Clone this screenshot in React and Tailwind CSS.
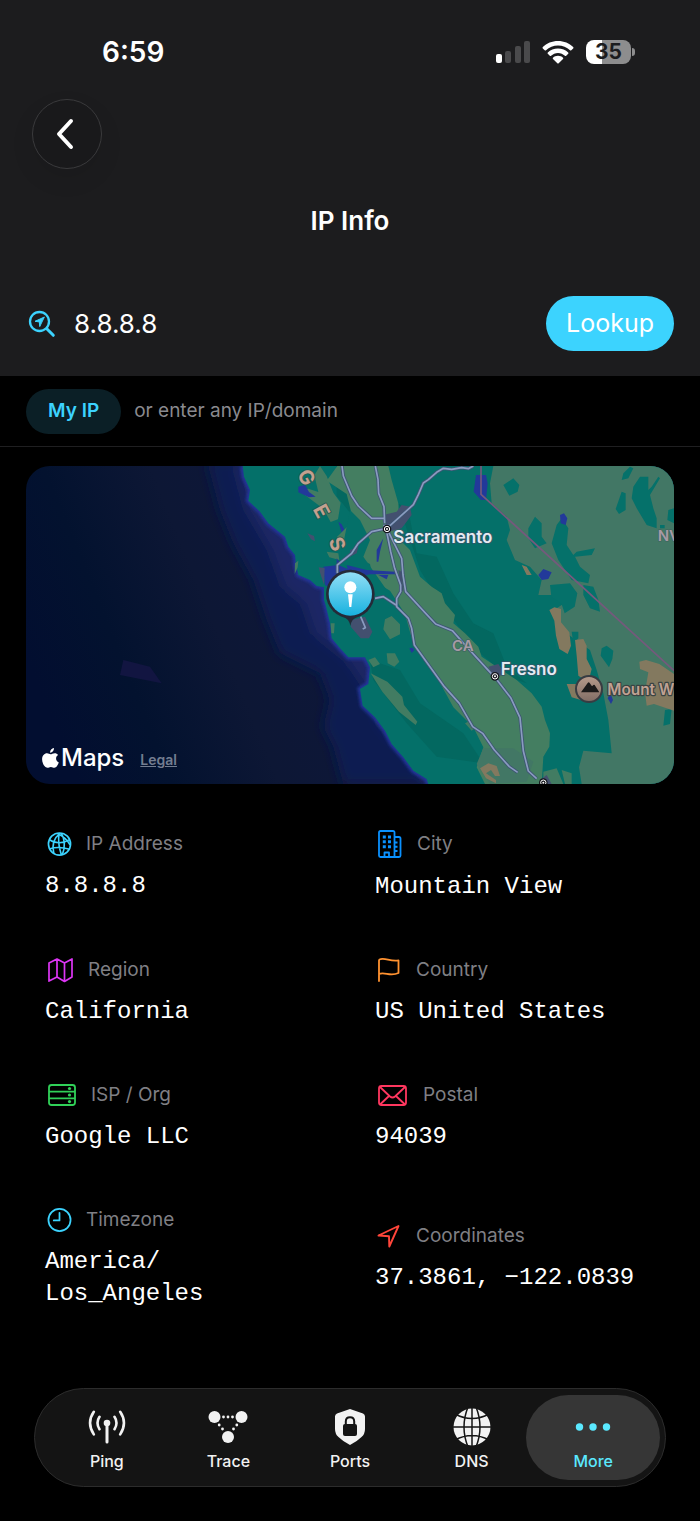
import { useState } from "react";

const ROAD = "#8a9cc0";

function Signal() {
  return (
    <svg className="h-6 w-[34px]" viewBox="0 0 34 24" aria-hidden="true">
      <rect x="0" y="14" width="6" height="9" rx="2" fill="#fff" />
      <rect x="9" y="11" width="6" height="12" rx="2" fill="#4a4a4c" />
      <rect x="19" y="6" width="6" height="17" rx="2" fill="#4a4a4c" />
      <rect x="28" y="1" width="6" height="22" rx="2" fill="#4a4a4c" />
    </svg>
  );
}

function Wifi() {
  return (
    <svg className="h-6 w-8" viewBox="0 0 32 24" fill="#fff" aria-hidden="true">
      <path d="M16 1C10 1 4.700 3.300.8 7.100c-.4.400-.4.900 0 1.300l1.900 1.900c.4.400.9.400 1.300 0C7.200 7.200 11.400 5.400 16 5.400s8.800 1.800 12 4.900c.4.400.9.400 1.300 0l1.900-1.900c.4-.4.400-.9 0-1.300C27.300 3.300 22 1 16 1z" />
      <path d="M16 8.400c-4 0-7.600 1.500-10.200 4-.4.400-.4.900 0 1.300l2 2c.4.400.9.400 1.300 0 1.800-1.700 4.200-2.800 6.900-2.800s5.100 1.100 6.900 2.800c.4.400.9.400 1.300 0l2-2c.4-.4.400-.9 0-1.300C23.600 9.900 20 8.400 16 8.400z" />
      <path d="M16 15.800c-2 0-3.700.7-5 1.900-.4.400-.4.900 0 1.300l4.300 4.300c.4.400 1 .4 1.400 0L21 19c.4-.4.400-.9 0-1.300-1.300-1.200-3-1.900-5-1.900z" />
    </svg>
  );
}

function Battery() {
  return (
    <div className="flex items-center gap-px">
      <div className="flex h-6 w-[45px] items-center justify-center rounded-lg bg-[linear-gradient(to_right,#fff_36%,#8d8d8e_36%)] text-[21px] leading-6 font-bold text-[#1c1c1e]">
        35
      </div>
      <div className="h-2 w-[3px] rounded-r-full bg-[#8d8d8e]" />
    </div>
  );
}

function SearchPin() {
  return (
    <svg className="h-7 w-7" viewBox="0 0 28 28" fill="none" stroke="#3cd3fe" strokeWidth="2.300" strokeLinecap="round" strokeLinejoin="round" aria-hidden="true">
      <circle cx="11.500" cy="11.500" r="9.500" />
      <path d="M18.800 18.800l6.500 6.500" strokeWidth="3" />
      <path d="M16 7.200L7 11.300l4.300.6.400 4.300z" fill="#3cd3fe" strokeWidth="1" />
    </svg>
  );
}

function GlobeIcon() {
  return (
    <svg className="h-[26px] w-[25px]" viewBox="0 0 26 26" fill="none" stroke="#3cd3fe" strokeWidth="1.700" aria-hidden="true">
      <circle cx="13" cy="13" r="11.500" />
      <path d="M2.500 8.500c6 4.500 15 4 21 0M3 18c6-2 14-1.500 20.500.5M13.500 2C7 7 5 14 7 22.500M12.500 2c-1 7 0 15 2.500 22.500M15 2c3.500 6 4 14 1 22M11 2c6 3 10.500 7 13 12" />
    </svg>
  );
}

function MapIcon() {
  return (
    <svg className="h-[26px] w-[27px]" viewBox="0 0 27 26" fill="none" stroke="#dd35f5" strokeWidth="1.700" strokeLinejoin="round" aria-hidden="true">
      <path d="M2 6l8-4 7.500 4L25 2v18l-7.500 4.500L10 20l-8 4zM10 2v18M17.500 6v18.500" />
    </svg>
  );
}

function ServerIcon() {
  return (
    <svg className="h-[26px] w-[30px]" viewBox="0 0 30 26" fill="none" stroke="#30d158" strokeWidth="1.800" aria-hidden="true">
      <rect x="2" y="3" width="26" height="20" rx="2.500" />
      <path d="M2 9.700h26M2 16.300h26" />
      <g fill="#30d158" stroke="none">
        <circle cx="22.500" cy="6.500" r="1.600" />
        <circle cx="22.500" cy="13" r="1.600" />
        <circle cx="22.500" cy="19.600" r="1.600" />
      </g>
    </svg>
  );
}

function ClockIcon() {
  return (
    <svg className="h-[26px] w-[25px]" viewBox="0 0 26 26" fill="none" stroke="#3cd3fe" strokeWidth="1.800" strokeLinecap="round" strokeLinejoin="round" aria-hidden="true">
      <circle cx="13" cy="13" r="11.500" />
      <path d="M13 5.500v8H7" />
    </svg>
  );
}

function BuildingIcon() {
  return (
    <svg className="h-[30px] w-[26px]" viewBox="0 -1 26 30" fill="none" stroke="#0a91ff" strokeWidth="1.800" strokeLinejoin="round" aria-hidden="true">
      <path d="M17.500 27V2.500q0-1.500-1.500-1.500H3.500Q2 1 2 2.500v23Q2 27 3.500 27H22q1.500 0 1.500-1.500v-17Q23.500 7 22 7h-4.500M7.500 27v-4.500h4.500V27" />
      <g fill="#0a91ff" stroke="none">
        <path d="M5.800 5.500h3v3h-3zM11 5.500h3v3h-3zM5.800 10.300h3v3h-3zM11 10.300h3v3h-3zM5.800 15.200h3v3h-3zM11 15.200h3v3h-3z" />
        <path d="M18 11.500h2.500v2H18zM18 15.700h2.500v2H18zM18 19.900h2.500v2H18z" />
      </g>
    </svg>
  );
}

function FlagIcon() {
  return (
    <svg className="h-[26px] w-[25px]" viewBox="0 0 25 26" fill="none" stroke="#ff9230" strokeWidth="1.800" strokeLinecap="round" strokeLinejoin="round" aria-hidden="true">
      <path d="M2 24V3.500Q2 2.500 3.500 2.200C9 .8 13 4.800 21.500 3.500V16C13 20 8 14.500 2 17" />
    </svg>
  );
}

function MailIcon() {
  return (
    <svg className="h-[26px] w-8" viewBox="0 0 32 26" fill="none" stroke="#ff375f" strokeWidth="1.800" strokeLinejoin="round" aria-hidden="true">
      <rect x="2" y="4" width="27" height="19" rx="2.500" />
      <path d="M3 5l10 9.500q2.500 2 5 0L28 5M3 22.500l9-8.500M28 22.500L19 14" />
    </svg>
  );
}

function ArrowIcon() {
  return (
    <svg className="h-[26px] w-[25px]" viewBox="0 0 25 26" fill="none" stroke="#ff453a" strokeWidth="1.900" strokeLinejoin="round" aria-hidden="true">
      <path d="M21.500 3L1.500 12.500l10.500.8.300 10.200z" />
    </svg>
  );
}

function PingIcon() {
  return (
    <svg className="h-10 w-10" viewBox="0 0 40 40" fill="none" stroke="#f2f2f2" strokeWidth="2.600" strokeLinecap="round" aria-hidden="true">
      <circle cx="20" cy="16" r="3.300" fill="#f2f2f2" stroke="none" />
      <path d="M20 17v18" strokeWidth="3" />
      <path d="M12.500 9.800q-4 6 0 12.400M27.500 9.800q4 6 0 12.400M6.800 4.800q-7.500 11 0 22.600M33.200 4.800q7.500 11 0 22.600" />
    </svg>
  );
}

function TraceIcon() {
  return (
    <svg className="h-10 w-10" viewBox="0 0 40 40" fill="#f2f2f2" aria-hidden="true">
      <circle cx="6.500" cy="10" r="6" />
      <circle cx="33.500" cy="10" r="6" />
      <circle cx="20" cy="30" r="6" />
      <circle cx="15.500" cy="10" r="1.400" />
      <circle cx="20" cy="10" r="1.400" />
      <circle cx="24.500" cy="10" r="1.400" />
      <circle cx="11.200" cy="18" r="1.400" />
      <circle cx="14.500" cy="22" r="1.400" />
      <circle cx="28.800" cy="18" r="1.400" />
      <circle cx="25.500" cy="22" r="1.400" />
    </svg>
  );
}

function PortsIcon() {
  return (
    <svg className="h-10 w-10" viewBox="0 0 40 40" aria-hidden="true">
      <path d="M20 2l13 4.600q2 .8 2 3V22q0 5-3.500 8Q27 34.500 20 38 13 34.500 8.500 30 5 27 5 22V9.600q0-2.200 2-3z" fill="#f2f2f2" />
      <rect x="13" y="17" width="14" height="12" rx="2" fill="#141414" />
      <path d="M15.800 18v-3.500q0-4.200 4.200-4.200t4.200 4.200V18" fill="none" stroke="#141414" strokeWidth="2" />
    </svg>
  );
}

function DnsIcon() {
  return (
    <svg className="h-10 w-10" viewBox="0 0 40 40" fill="none" stroke="#141414" strokeWidth="1.500" aria-hidden="true">
      <circle cx="20" cy="20" r="18.500" fill="#f2f2f2" stroke="none" />
      <path d="M20 0v40M0 20h40M16 0q-8 20 0 40M24 0q8 20 0 40M3 7q17 9 34 0M3 33q17-9 34 0" />
    </svg>
  );
}

function MoreIcon() {
  return (
    <svg className="h-10 w-10" viewBox="0 0 40 40" fill="#5be9ff" aria-hidden="true">
      <circle cx="6.500" cy="20" r="3.700" />
      <circle cx="20" cy="20" r="3.700" />
      <circle cx="33.500" cy="20" r="3.700" />
    </svg>
  );
}

function CityDot({ x, y }) {
  return (
    <g>
      <circle cx={x} cy={y} r="13" fill="#15161c" />
      <circle cx={x} cy={y} r="8" fill="none" stroke="#fff" strokeWidth="3" />
      <circle cx={x} cy={y} r="3" fill="#fff" />
    </g>
  );
}

// drawn at three units per pixel
function Terrain() {
  return (
    <svg className="block h-full w-full" viewBox="18 18 1944 954" preserveAspectRatio="xMidYMid slice" role="img" aria-label="Map of California">
      <defs>
        <linearGradient id="sea" x1="0" y1="0.600" x2="1" y2="0.400">
          <stop offset="0" stopColor="#020e30" />
          <stop offset="0.140" stopColor="#03122f" />
          <stop offset="0.300" stopColor="#0d1735" />
          <stop offset="0.600" stopColor="#0e173d" />
          <stop offset="1" stopColor="#0d1b52" />
        </linearGradient>
        <linearGradient id="pin" x1="0" y1="0" x2="0" y2="1">
          <stop offset="0" stopColor="#91def6" />
          <stop offset="1" stopColor="#18b2df" />
        </linearGradient>
        <linearGradient id="peak" x1="0" y1="0" x2="0" y2="1">
          <stop offset="0" stopColor="#b79b8b" />
          <stop offset="1" stopColor="#806c64" />
        </linearGradient>
        <filter id="soft" x="-20%" y="-20%" width="140%" height="140%">
          <feGaussianBlur stdDeviation="18" />
        </filter>
        <filter id="glow" x="-20%" y="-20%" width="140%" height="140%">
          <feGaussianBlur stdDeviation="5" />
        </filter>
      </defs>

      <rect x="18" y="18" width="1944" height="954" fill="url(#sea)" />
      <path d="M310 600l80 20 35 50-125-25z" fill="#121541" />
      <g filter="url(#soft)">
        <path d="M560 0L600 150 640 250 700 360 740 480 780 580 900 640 930 720 910 800 940 860 970 972H1300V0z" fill="#0d1f51" />
        <path d="M640 0L680 150 750 270 790 380 850 430 880 520 980 600 1040 690 1080 800 1160 880 1220 990H1400V0z" fill="#1a2765" />
      </g>
      <path d="M668 18l4 32 18 40-5 32 35 33 25 35 50 40 10 30 20 25 3 30 7 30 35 15 20 18 22 4v38l6 20 12 50 5 45 25 30 25 27h50l15 30-5 50-25 15 8 50 37 35 30 40 20 40 35 40 30 40 40 25 5 17" fill="none" stroke="#24359b" strokeWidth="14" filter="url(#glow)" />
      <path d="M668 18l4 32 18 40-5 32 35 33 25 35 50 40 10 30 20 25 3 30 7 30 35 15 20 18 22 4v38l6 20 12 50 5 45 25 30 25 27h50l15 30-5 50-25 15 8 50 37 35 30 40 20 40 35 40 30 40 40 25 5 17H1962V18z" fill="#047069" />

      {/* coast range */}
      <g fill="#427c62">
        <path d="M900 18l20 30 20 50 22 30-8 50-22 8-22-40-40-30-35-25 30-5 30 10-12-50z" />
        <path d="M920 275l35 5 3 20-30-8zM825 310l10-8-2 20-9 20zM932 490l12 0-2 30-8 0z" />
      </g>
      <g fill="#22399a">
        <path d="M835 80l20-6 12 22 20 14-20 2-32-15z" />
        <path d="M955 185l10 8 13 25-12 2zM950 295l8 10-8 10z" />
        <path d="M910 320l45-5 35 15v60l-45 0-30-15z" />
      </g>
      <path d="M862 220l20 8 3 16-12-6zM896 322l18 2-2 50-10-30z" fill="#43506f" />

      <g transform="translate(990 0)">
        {/* deeper slopes */}
        <g fill="#036860">
          <path d="M145 130l30 20 25 130 60 10 50 110 60 90 60 30 40 100 60 50-60-20-100-90-110-150-50-80z" />
          <path d="M60 600l90 30 60 100 130 90 60 90-140-20-90-100-100-130z" />
          <path d="M-40 18l70 0-20 80-10 60-40-50z" />
        </g>
        {/* valley */}
        <path d="M-38 18H115l10 42 20 70 5 110 30 30 30 80 35 30 30 20 10 30 30 35-5 25 35 30 40 40 10 30 45 30 60 40 45 40 30 40 10 40 15 40-2 40-18 30-5 82H405l-25-50 20-60-30-60-60-60-60-110-60-80-25-90-45-70-50-30-10-50-60-30-40-50 50-50-20-80-60-40z" fill="#447e61" />
        <path d="M0 150l30 30 30 60-20 50 70 100-30 0-60-50-50-40z" fill="#047069" />
        <path d="M400 865l90 0 60 40-20 60-110 7-40-60z" fill="#427765" />
        <g fill="#427c62">
          <path d="M105 478l20-10 25 25 0 30-30 15-20-30zM55 600l20-8 15 20-20 10zM110 580l25 0 13 25-15 15-20-10zM62 640l50 25 45 45 5 25 40 50-5 10-50-40-50-60zM345 790l20-10 15 20-15 12z" />
          <path d="M580 935l40-10 20 47h-60zM635 930l30 10v32h-20z" />
        </g>
        {/* great basin */}
        <path d="M430 18H972V972H695l-8-50 13-50 85 8-10-100-15-80-20-70-20-60-50-35-40-30-10-60 30-20-40-20-45 0 10-45-35-40-45-20-25-60 10-30-10-40-45-40-5-60z" fill="#427765" />
        <g fill="#05716a">
          <path d="M460 75l30-20 18 20-5 20-25 12zM535 205l20-35 20 20 0 40 15 20-35 15-20-30zM620 195l15-20 20 30-5 50 20 30 10-10 55-10-10 20-50 5 15 30 30 25-5 25-50-10-40-60-20-50z" />
          <path d="M700 375l30 5 15 40 5 35-30-10-20-40zM755 565l15-8 20 15-3 25-10 25-25-35zM665 515l20 0 0 20-15 15zM600 375l60-5 22 30-8 40-30 20-10-30-30-20z" />
          <path d="M850 80l20-30 25 0 0 40 10-10 20-30 5 5-30 50 10 40 10 30 0 30-30-10-30-50-15-30zM815 95l12 5 0 50-20 12-10-15zM820 40l20-20 10 5-15 30-20 5zM955 150l17-5v45l-20-10zM945 750l20-3-5 45-20 5zM930 195h14v10h-14z" />
        </g>
        <g fill="#83795f">
          <path d="M598 450l15-8 20 5 0 40 25 30 5 40-10 25-25-15-10-40-5-45zM675 540l25-3 10 20 0 40 15 30-10 40-30-20-5-60zM650 672l35 0 15 50-35-10zM868 605l20-5 40 12 44 30v110l-60-20-22 5-5-40 10-60-25-10zM515 315l15 5 15 25-15 0z" />
          <path d="M390 925l25-15 25 8 10 30-15 0-12-18-15 10 30 20 0 10-30-15z" />
        </g>
        <g fill="#22399a">
          <path d="M378 45h30l5 25-5 50-15 0-22-25zM630 165l12-5 10 15-5 20-15-5zM565 345l15-18 25 10-10 20-20 3zM178 565l10-2 5 8-8 8zM773 715l8-15 8 20-6 12z" />
          <path d="M-10 315l60 15 85 5v8l-75 0-60 15zM80 270l20-35-10 40-5 30h-5zM85 345l30 0-5 13z" />
        </g>
        <g fill="#43506f">
          <path d="M100 165l40-10 15-20 25 5 5 25-30 40-40 10zM145 330l10 5 5 60-5-5zM5 480l40-10 22 45-10 20-25 0-30-35zM415 620l30-8 20 30-30 10zM0 270l25-10-5 20-20 10zM570 960l20-15 15 27h-35z" />
        </g>

        <path d="M393 18v85L972 632" fill="none" stroke="#75597c" strokeWidth="5" />

        <g fill="none" stroke="#3e5573" strokeWidth="10" strokeLinejoin="round">
          <path d="M76 18l8 40 2 42 16 40 2 50M-24 18l4 30 25 60 20 30 40 37h38M370 18l-15 8-20-3-30 5-25-3-20 12-25 22-15 10-15 35-15 30-70 63h-20" />
          <path d="M110 205l-45 10-40 35-20 30-43 35v25M110 215l12 60 12 50 18 50v20l-12 20v25l35 35 10 30 8 50 90 125 45 50 40 70 30 20 35 50 45 50 25 17M115 215l40 80 4 50 8 50 60 65 30 32 50 20 40 45 90 98 45 58 28 60 10 100 15 60 25 23M75 415l25-5 38 25" />
        </g>
        <g fill="none" stroke={ROAD} strokeWidth="5" strokeLinejoin="round">
          <path d="M76 18l8 40 2 42 16 40 2 50M-24 18l4 30 25 60 20 30 40 37h38M370 18l-15 8-20-3-30 5-25-3-20 12-25 22-15 10-15 35-15 30-70 63h-20" />
          <path d="M110 205l-45 10-40 35-20 30-43 35v25M110 215l12 60 12 50 18 50v20l-12 20v25l35 35 10 30 8 50 90 125 45 50 40 70 30 20 35 50 45 50 25 17M115 215l40 80 4 50 8 50 60 65 30 32 50 20 40 45 90 98 45 58 28 60 10 100 15 60 25 23M75 415l25-5 38 25M32 470l14 33-8 4" />
        </g>
        <CityDot x={111} y={207} />
        <CityDot x={435} y={649} />
        <CityDot x={580} y={968} />

        <circle cx="717" cy="687" r="39" fill="url(#peak)" stroke="#383c42" strokeWidth="6" />
        <path d="M693 697l20-28q3-4 6 0l7 10 4-4q2-2 4 0l14 22z" fill="#1c1a1a" />
      </g>

      <g fontFamily="Inter, sans-serif" fontWeight="600" paintOrder="stroke" strokeLinejoin="round">
        <g fill="#c3a08f" stroke="#26584f" strokeWidth="5" fontSize="60" fontWeight="700" textAnchor="middle">
          <text transform="translate(841 62) rotate(62)">G</text>
          <text transform="translate(886 163) rotate(62)">E</text>
          <text transform="translate(932 260) rotate(68)">S</text>
        </g>
        <g fill="#e4ebf2" stroke="#33566a" strokeWidth="5" fontSize="51">
          <text x="1120" y="249">Sacramento</text>
          <text x="1442" y="646">Fresno</text>
        </g>
        <g fill="#a79aa5" stroke="#40675f" strokeWidth="4" fontSize="45">
          <text x="1296" y="572">CA</text>
          <text x="1913" y="243">NV</text>
        </g>
        <text x="1762" y="704" fill="#c0a293" stroke="#3a4443" strokeWidth="7" fontSize="46">Mount W</text>
      </g>

      <path d="M962 466q26 10 29 32 3-22 29-32z" fill="#252a38" />
      <circle cx="991" cy="402" r="73" fill="#252a38" />
      <circle cx="991" cy="402" r="65" fill="url(#pin)" />
      <circle cx="991" cy="382" r="18" fill="#fff" />
      <path d="M984 403h14l-4 38h-6z" fill="#fff" />
    </svg>
  );
}

const LEFT = [
  { id: "ip", label: "IP Address", value: "8.8.8.8", Icon: GlobeIcon },
  { id: "region", label: "Region", value: "California", Icon: MapIcon },
  { id: "isp", label: "ISP / Org", value: "Google LLC", Icon: ServerIcon },
  { id: "tz", label: "Timezone", value: "America/\nLos_Angeles", Icon: ClockIcon },
];

const RIGHT = [
  { id: "city", label: "City", value: "Mountain View", Icon: BuildingIcon },
  { id: "country", label: "Country", value: "US United States", Icon: FlagIcon },
  { id: "postal", label: "Postal", value: "94039", Icon: MailIcon },
  { id: "coords", label: "Coordinates", value: "37.3861, −122.0839", Icon: ArrowIcon },
];

const ROWS = LEFT.map((l, i) => [l, RIGHT[i]]);

const TABS = [
  { label: "Ping", Icon: PingIcon },
  { label: "Trace", Icon: TraceIcon },
  { label: "Ports", Icon: PortsIcon },
  { label: "DNS", Icon: DnsIcon },
  { label: "More", Icon: MoreIcon },
];

function Field({ label, value, Icon }) {
  return (
    <div className="flex flex-col gap-3">
      <dt className="flex min-h-7 items-center gap-[14px] pl-0.5 text-[19px] leading-7 text-[#7f7f84]">
        <Icon />
        {label}
      </dt>
      <dd className="font-['Liberation_Mono',monospace] text-2xl leading-8 whitespace-pre-line text-white">{value}</dd>
    </div>
  );
}

export default function App() {
  const [query, setQuery] = useState("8.8.8.8");
  const [tab, setTab] = useState("More");

  return (
    <div className="flex min-h-screen flex-col bg-black font-[Inter,sans-serif] text-white">
      <header className="bg-[#1c1c1e] pb-[25px]">
        <div className="flex items-center justify-between pt-8 pr-[65px] pl-[102px]">
          <span className="text-[28px] leading-10 font-semibold">6:59</span>
          <div className="flex items-center gap-3">
            <Signal />
            <Wifi />
            <Battery />
          </div>
        </div>
        <div className="px-8 pt-[27px]">
          <button type="button" aria-label="Back" className="flex size-[70px] items-center justify-center rounded-full border border-[#3a3a3c] bg-[#19191b] shadow-[0_10px_24px_rgba(0,0,0,0.08)]">
            <svg className="h-8 w-6" viewBox="0 0 24 32" fill="none" stroke="#fff" strokeWidth="4" strokeLinecap="round" strokeLinejoin="round" aria-hidden="true">
              <path d="M16 3L4 16l12 13" />
            </svg>
          </button>
        </div>
        <h1 className="pt-8 text-center text-[26px] leading-10 font-semibold">IP Info</h1>
        <form className="flex items-center gap-[18px] pt-[55px] pr-[26px] pl-7" onSubmit={(e) => e.preventDefault()}>
          <SearchPin />
          <input
            aria-label="IP or domain"
            className="min-w-0 flex-1 bg-transparent text-[26px] leading-10 outline-none"
            value={query}
            onChange={(e) => setQuery(e.target.value)}
          />
          <button type="submit" className="h-[55px] rounded-full bg-[#3cd3fe] px-5 text-[25px] text-white">Lookup</button>
        </form>
      </header>

      <div className="flex items-center gap-[13px] border-b border-[#1f1f21] px-[26px] pt-[13px] pb-3">
        <button type="button" className="h-[45px] rounded-full bg-[#0b1f26] px-[22px] text-[19px] font-semibold text-[#3cd3fe]">My IP</button>
        <span className="text-[19px] text-[#8a8a8f]">or enter any IP/domain</span>
      </div>

      <section className="relative mx-[26px] mt-[19px] h-[318px] overflow-hidden rounded-3xl">
        <Terrain />
        <div className="absolute bottom-2 left-4 flex items-center gap-4">
          <span className="flex items-center gap-0.5 text-2xl leading-9 font-medium">
            <svg className="h-[21px] w-[17px]" viewBox="0 0 16 20" fill="#fff" aria-hidden="true">
              <path d="M11.300 0c.1 1.200-.3 2.300-1 3.100-.7.900-1.700 1.400-2.700 1.300-.1-1.100.4-2.200 1-3C9.300.6 10.400.1 11.300 0zM15.200 6.700c-2.900 1.900-2.300 5.900.7 7.100-.7 2-2.300 5-4.200 5-1.300 0-1.700-.8-3.300-.8s-2.100.8-3.300.8C2.700 18.800 0 14.600 0 11c0-3.700 2.200-5.900 4.700-5.900 1.400 0 2.500.9 3.400.9.900 0 2.200-1 3.900-1 1.300 0 2.500.6 3.200 1.700z" />
            </svg>
            Maps
          </span>
          <a href="#legal" className="pt-1 text-[14px] leading-6 font-semibold text-[#737d90] underline">Legal</a>
        </div>
      </section>

      <dl className="flex flex-col gap-[53px] px-[45px] pt-[45px]">
        {ROWS.map(([l, r]) => (
          <div key={l.id} className="grid grid-cols-2 items-center gap-x-[50px]">
            <Field {...l} />
            <Field {...r} />
          </div>
        ))}
      </dl>

      <nav className="mx-[34px] mt-auto mb-[34px] flex rounded-full border border-[#2c2c2c] bg-[#141414] px-[11px] py-[6px]">
        {TABS.map(({ label, Icon }) => (
          <button
            key={label}
            type="button"
            onClick={() => setTab(label)}
            className={
              "-mx-[6px] flex h-[85px] flex-1 flex-col items-center justify-center gap-0.5 rounded-full pt-1 text-base leading-6 font-medium " +
              (tab === label ? "bg-[#363636] text-[#5be9ff]" : "text-[#f2f2f2]")
            }
          >
            <Icon />
            {label}
          </button>
        ))}
      </nav>
    </div>
  );
}
